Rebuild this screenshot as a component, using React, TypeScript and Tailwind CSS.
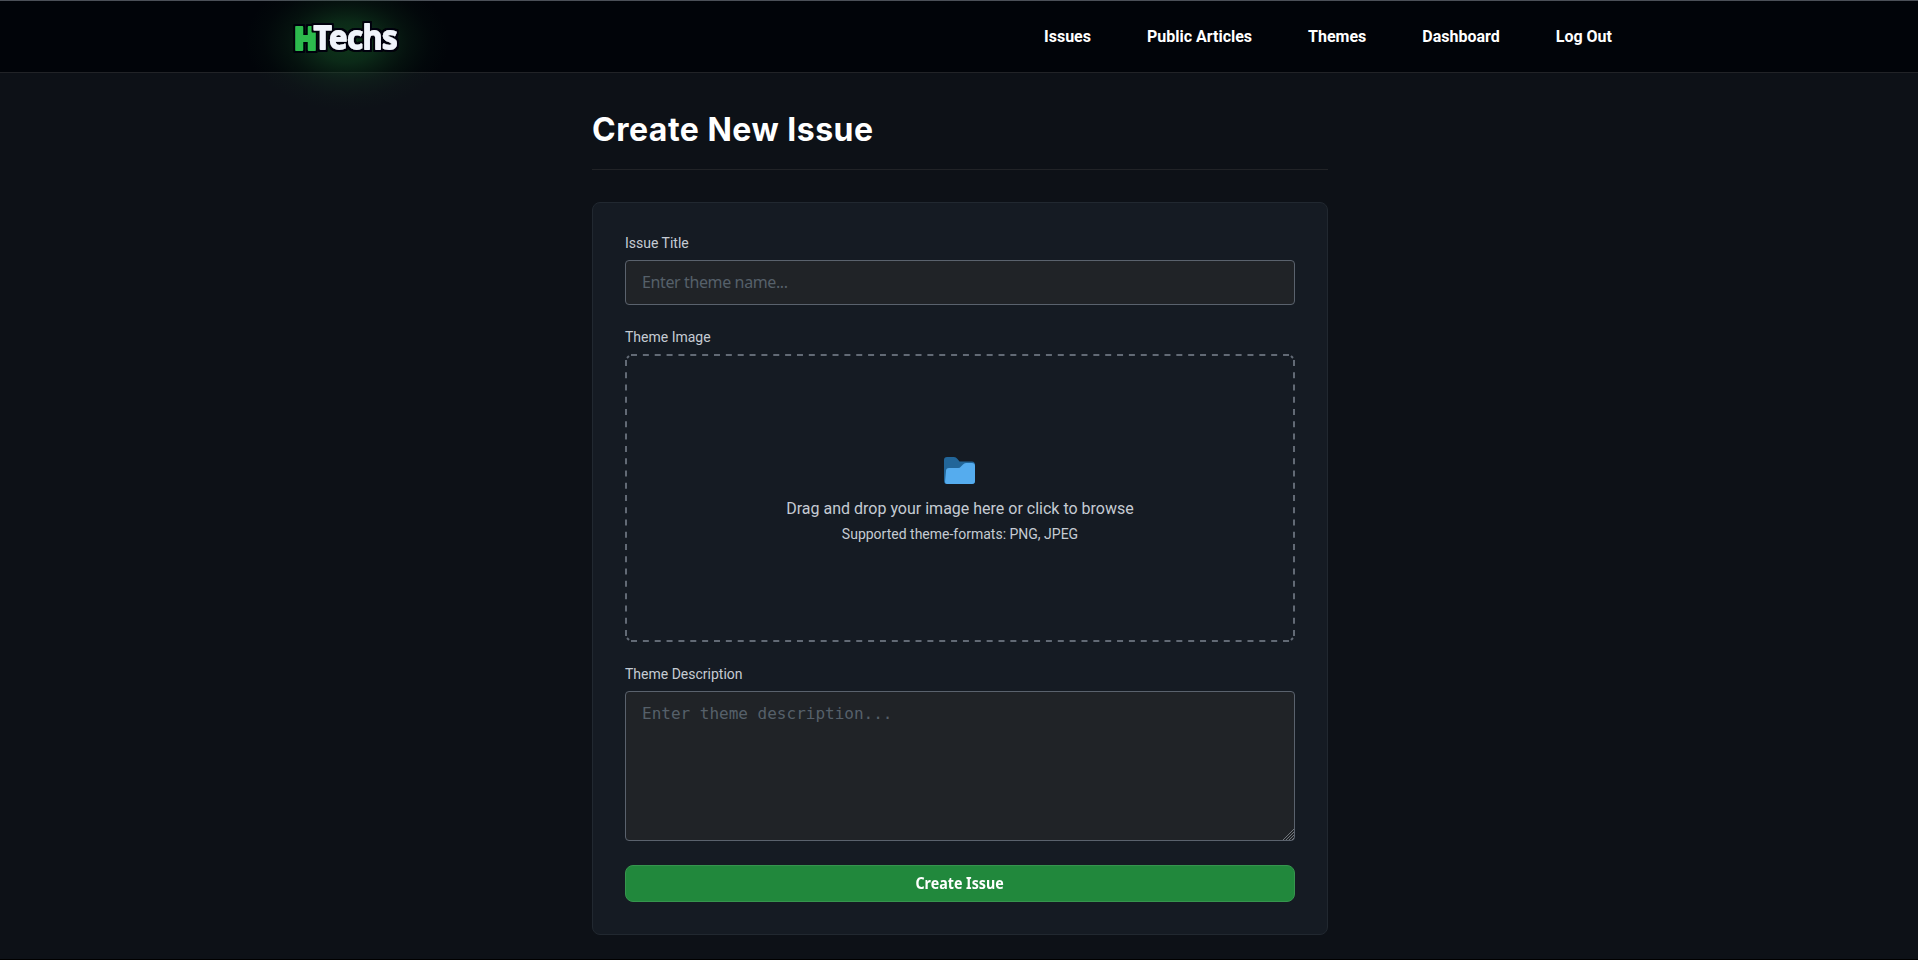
const links = ["Issues", "Public Articles", "Themes", "Dashboard", "Log Out"];

function Logo() {
  return (
    <svg width="120" height="40" viewBox="0 0 120 40" className="overflow-visible">
      <defs>
        <radialGradient id="glow">
          <stop offset="0" stopColor="#1b6b2c" stopOpacity="0.5" />
          <stop offset="0.3" stopColor="#18592a" stopOpacity="0.44" />
          <stop offset="0.6" stopColor="#144522" stopOpacity="0.2" />
          <stop offset="0.82" stopColor="#123d20" stopOpacity="0.06" />
          <stop offset="1" stopColor="#123d20" stopOpacity="0" />
        </radialGradient>
        <filter id="outline" x="-20%" y="-20%" width="140%" height="140%">
          <feMorphology in="SourceAlpha" operator="dilate" radius="1.6" result="grown" />
          <feFlood floodColor="#020408" />
          <feComposite in2="grown" operator="in" result="edge" />
          <feMerge>
            <feMergeNode in="edge" />
            <feMergeNode in="SourceGraphic" />
          </feMerge>
        </filter>
      </defs>
      <ellipse cx="61" cy="25" rx="102" ry="68" fill="url(#glow)" />
      <g strokeLinejoin="round" className="font-['Noto_Sans',sans-serif] text-[32px]">
        <text
          x="8"
          y="32.500"
          textLength="23"
          lengthAdjust="spacingAndGlyphs"
          fill="#2dba4e"
          stroke="#2dba4e"
          strokeWidth="2"
          filter="url(#outline)"
          className="font-black"
        >
          H
        </text>
        <text
          x="28"
          y="32"
          textLength="83.500"
          lengthAdjust="spacingAndGlyphs"
          fill="#f0f3fb"
          stroke="#f0f3fb"
          strokeWidth="1.8"
          filter="url(#outline)"
          className="font-semibold"
        >
          Techs
        </text>
      </g>
    </svg>
  );
}

function Folder() {
  return (
    <svg width="32" height="28" viewBox="0 0 32 28">
      <path d="M0 3Q0 0 3 0H10Q12 0 13.500 2L15.500 4.500H28Q31 4.500 31 8V24Q31 27 28 27H3Q0 27 0 24Z" fill="#226699" />
      <path d="M3 27Q1 27 1 25L2 14Q2 11 5 11H14Q16 11 17 9.500L19 7.500Q20 6 22 6H28Q31 6 31 9V24Q31 27 28 27Z" fill="#55acee" />
    </svg>
  );
}

export default function App() {
  return (
    <div className="flex h-[960px] flex-col border-b border-black bg-[#0d1117] font-[Roboto,sans-serif] text-[#c5cbd3]">
      <header className="flex h-[73px] shrink-0 items-center justify-between border-y border-t-[#4b5058] border-b-[#212327] bg-[#010409] pr-[306px] pl-[286px]">
        <Logo />
        <nav className="flex gap-14 text-base font-bold text-white">
          {links.map((l) => (
            <a key={l} href="#">{l}</a>
          ))}
        </nav>
      </header>
      <main className="ml-[592px] flex w-[736px] flex-col">
        <h1 className="mt-8 mb-8 h-[65px] border-b border-[#212327] font-[Inter,sans-serif] text-[32px] leading-[50px] font-bold tracking-[0.5px] text-white">
          Create New Issue
        </h1>
        <form className="flex flex-col gap-6 rounded-lg border border-[#212830] bg-[#151b23] p-8">
          <div className="flex flex-col gap-2">
            <label className="text-sm leading-[17px]">Issue Title</label>
            <input
              placeholder="Enter theme name..."
              className="h-[45px] rounded border border-[#5a626d] bg-[#202327] px-4 pb-0.5 font-['Noto_Sans',sans-serif] text-base tracking-[-0.38px] placeholder:text-[#56606a]"
            />
          </div>
          <div className="flex flex-col gap-2">
            <span className="text-sm leading-[17px]">Theme Image</span>
            <div className="relative flex h-72 flex-col items-center justify-center pt-[5px]">
              <svg className="absolute inset-0" width="670" height="288" fill="none" stroke="#626a75" strokeWidth="2">
                <path d="M6 1H664M6 287H664" strokeDasharray="6 5.855" />
                <path d="M1 6V282M669 6V282" strokeDasharray="6 6.270" />
                <path d="M2 4 4 2M666 2l2 2M2 284l2 2M666 286l2-2" />
              </svg>
              <Folder />
              <p className="mt-3 text-base leading-6">Drag and drop your image here or click to browse</p>
              <p className="mt-[3px] text-sm leading-5">Supported theme-formats: PNG, JPEG</p>
            </div>
          </div>
          <div className="flex flex-col gap-2">
            <label className="text-sm leading-[17px]">Theme Description</label>
            <div className="relative flex">
              <textarea
                placeholder="Enter theme description..."
                className="h-[150px] w-full resize-none rounded border border-[#5a626d] bg-[#202327] px-4 py-3 font-['DejaVu_Sans_Mono',monospace] text-base leading-[19px] placeholder:text-[#56606a]"
              />
              <svg className="absolute right-px bottom-px" width="11" height="11" stroke="#858a90" strokeWidth="0.8">
                <path d="M0 11 11 0M3 11l8-8M6 11l5-5M9 11l2-2" />
              </svg>
            </div>
          </div>
          <button className="h-[37px] rounded-lg border border-[#36954e] bg-[#21883c] pb-0.5 font-['Noto_Sans',sans-serif] text-base font-bold text-white">
            <span className="inline-block scale-x-[0.89]">Create Issue</span>
          </button>
        </form>
      </main>
    </div>
  );
}
